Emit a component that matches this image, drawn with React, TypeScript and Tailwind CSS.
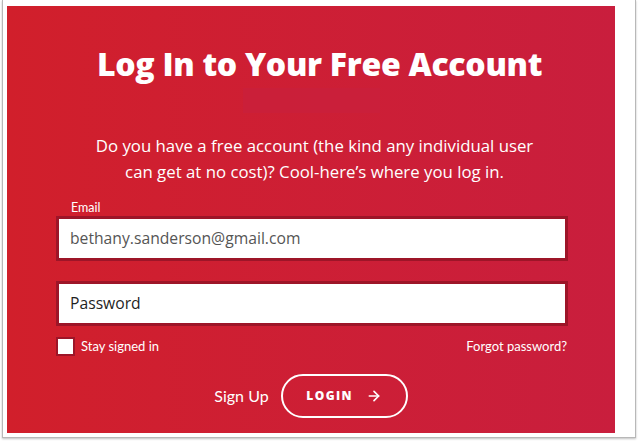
import { ArrowRight } from "lucide-react";

const LATO = { fontFamily: "Lato, 'Open Sans', sans-serif" };
const OPEN = { fontFamily: "'Open Sans', Lato, sans-serif" };

function Field({ value, muted }: { value: string; muted?: boolean }) {
  return (
    <div className="h-[45px] border-[3px] border-[#9d1528] bg-white flex items-center pl-[11px]">
      <span className={`text-[15.7px] ${muted ? "text-[#555555]" : "text-[#1f1f1f]"}`} style={OPEN}>
        {value}
      </span>
    </div>
  );
}

export default function App() {
  return (
    <div className="w-[638px] h-[442px] bg-white" style={LATO}>
      <div className="ml-[2px] w-[634px] h-[438px] border-l border-r border-b border-[#b8b8b8] shadow-[0_1px_2px_rgba(0,0,0,0.25)] pl-[4px] pt-[6px]">
        <div className="w-[608px] h-[427px] bg-gradient-to-r from-[#d11f2b] to-[#c91e3d] text-white flex flex-col items-center">
          <h1 className="pt-[38px] pl-[17px] text-[32px] leading-[40px] font-extrabold tracking-[-0.3px]" style={OPEN}>
            Log In to Your Free Account
          </h1>
          <div className="mt-[4px] w-[137px] h-[25px] bg-[#c8203e]/60" />

          <p className="mt-[20px] pl-[7px] text-[16.8px] leading-[26px] text-center" style={OPEN}>
            Do you have a free account (the kind any individual user
            <br />
            can get at no cost)? Cool-here’s where you log in.
          </p>

          <div className="self-stretch ml-[49px] mr-[47px] mt-[12px]">
            <div className="pt-[3px] text-[12.5px] leading-[16px] pl-[15px]">Email</div>
            <Field value="bethany.sanderson@gmail.com" muted />
            <div className="mt-[20px]">
              <Field value="Password" />
            </div>

            <div className="mt-[11px] flex items-center justify-between">
              <label className="flex items-center gap-[6px] text-[13px]">
                <span className="w-[19px] h-[19px] border-[2px] border-[#9d1528] bg-white" />
                Stay signed in
              </label>
              <span className="text-[13px] pr-[1px]">Forgot password?</span>
            </div>
          </div>

          <div className="mt-[17px] flex items-center gap-[12px]">
            <span className="text-[16px]">Sign Up</span>
            <button
              type="button"
              className="w-[127px] h-[44px] rounded-full border-2 border-white flex items-center justify-center gap-[13px] text-[12px] font-extrabold tracking-[1.4px]"
              style={OPEN}
            >
              LOGIN
              <ArrowRight size={16} strokeWidth={2.5} />
            </button>
          </div>
        </div>
      </div>
    </div>
  );
}
